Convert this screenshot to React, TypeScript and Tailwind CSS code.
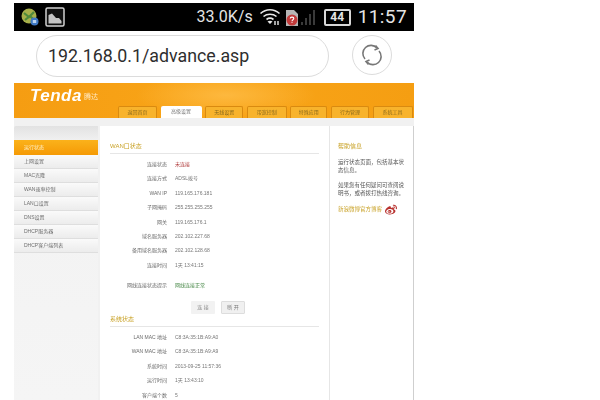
import React from "react"
import { FaWeibo } from "react-icons/fa"

const cjk = "font-['Liberation_Sans','Noto_Sans_CJK_SC',sans-serif]"

const tabs = [
  { label: "返回首页", w: "w-[39px]", active: false },
  { label: "高级设置", w: "w-[41px]", active: true },
  { label: "无线设置", w: "w-[38px]", active: false },
  { label: "带宽控制", w: "w-[40px]", active: false },
  { label: "特殊应用", w: "w-[37px]", active: false },
  { label: "行为管理", w: "w-[38px]", active: false },
  { label: "系统工具", w: "w-[40px]", active: false }
]

const menu = ["上网设置", "MAC克隆", "WAN速率控制", "LAN口设置", "DNS设置", "DHCP服务器", "DHCP客户端列表"]

const wanRows = [
  { label: "连接状态", value: "未连接", cls: "text-[#b03a3a]" },
  { label: "连接方式", value: "ADSL拨号" },
  { label: "WAN IP", value: "119.165.176.181" },
  { label: "子网掩码", value: "255.255.255.255" },
  { label: "网关", value: "119.165.176.1" },
  { label: "域名服务器", value: "202.102.227.68" },
  { label: "备用域名服务器", value: "202.102.128.68" },
  { label: "连接时间", value: "1天 13:41:15" }
]

const sysRows = [
  { label: "LAN MAC 地址", value: "C8:3A:35:1B:A9:A0" },
  { label: "WAN MAC 地址", value: "C8:3A:35:1B:A9:A9" },
  { label: "系统时间", value: "2013-09-25 11:57:36" },
  { label: "运行时间", value: "1天 13:43:10" },
  { label: "客户端个数", value: "5" }
]

const Row = ({ label, value, cls }: { label: string; value: string; cls?: string }) => (
  <div className="flex h-[14.4px] items-center">
    <div className="w-[57px] text-right whitespace-nowrap text-[#6b6b6b]">{label}</div>
    <div className={`ml-[8px] whitespace-nowrap ${cls ?? "text-[#777]"}`}>{value}</div>
  </div>
)

const StatusBar = () => (
  <div className="flex h-[28px] items-center bg-black pl-[7px] pr-[7px] text-[#e4e4e4]">
    <svg width="18" height="18" viewBox="0 0 18 18" className="mt-[-1px]">
      <circle cx="8" cy="8" r="7.5" fill="#a8b04a" />
      <path d="M3 5 L8 9 L13 4 M4 12 L9 8 L13 12" stroke="#4f8a3c" strokeWidth="2.2" fill="none" />
      <circle cx="13.5" cy="13.5" r="4" fill="#3f78c4" />
      <rect x="11.8" y="12" width="3.4" height="3" fill="#bcd4f0" />
    </svg>
    <svg width="20" height="20" viewBox="0 0 20 20" className="ml-[6px]">
      <rect x="1" y="1" width="18" height="18" rx="1.5" fill="#111" stroke="#cfcfcf" strokeWidth="1.5" />
      <path d="M3.5 16.5 V8 L7 6.5 L11 11 L14 11 L16.5 14 V16.5 Z" fill="#c4c4c4" />
    </svg>
    <div className="ml-auto flex items-center">
      <span className="text-[16px] font-['Roboto',sans-serif]">33.0K/s</span>
      <svg width="22" height="20" viewBox="0 0 22 20" className="ml-[6px]">
        <g fill="none" stroke="#e8e8e8" strokeWidth="1.6">
          <path d="M1.5 6.5 C7 1.5 15 1.5 20.5 6.5" />
          <path d="M4.5 9.5 C8 6.5 14 6.5 17.5 9.5" />
          <path d="M7.5 12.5 C9.5 11 12.5 11 14.5 12.5" />
        </g>
        <path d="M11 17 L8.5 14.5 C10 13.5 12 13.5 13.5 14.5 Z" fill="#e8e8e8" />
        <path d="M16 14 v4 M19 14 v4" stroke="#e8e8e8" strokeWidth="1.4" />
      </svg>
      <svg width="14" height="19" viewBox="0 0 14 19" className="ml-[4px]">
        <path d="M1 2 H9 L13 6 V18 H1 Z" fill="#b5b5b5" />
        <circle cx="7" cy="12" r="5.5" fill="#c23a3a" />
        <path d="M5.2 10.5 C5.4 8.6 8.8 8.8 8.8 10.6 C8.8 11.8 7 11.8 7 13.2 M7 14.2 V15" stroke="#fff" strokeWidth="1.1" fill="none" />
      </svg>
      <div className="ml-[2px] flex items-end gap-[2px]">
        <div className="h-[3px] w-[2px] bg-[#3a3a3a]" />
        <div className="h-[7px] w-[2px] bg-[#3a3a3a]" />
        <div className="h-[11px] w-[2px] bg-[#3a3a3a]" />
        <div className="h-[15px] w-[2px] bg-[#3a3a3a]" />
      </div>
      <div className="ml-[9px] flex h-[17px] w-[27px] items-center justify-center rounded-[2px] border-2 border-[#d8d8d8] text-[12px] font-bold font-['Roboto',sans-serif]">
        44
      </div>
      <span className="ml-[7px] text-[19px] font-['Roboto',sans-serif] tracking-[0.4px]">11:57</span>
    </div>
  </div>
)

const AddressBar = () => (
  <div className="flex h-[52px] items-start pl-[22px] pt-[4px]">
    <div className="flex h-[42px] w-[293px] items-center rounded-[21px] border border-[#dcdcdc] bg-white pl-[11px] text-[17.8px] text-[#2e2e2e] font-['Roboto',sans-serif]">
      192.168.0.1/advance.asp
    </div>
    <div className="ml-[23px] flex h-[40px] w-[40px] items-center justify-center rounded-full border border-[#dcdcdc]">
      <svg width="22" height="22" viewBox="0 0 22 22" fill="none" stroke="#777" strokeWidth="1.6">
        <path d="M4 15 A8 8 0 0 1 16 4" />
        <path d="M18 7 A8 8 0 0 1 6 18" />
        <path d="M14.5 1.5 L17 4.5 L13.5 6" />
        <path d="M7.5 20.5 L5 17.5 L8.5 16" />
      </svg>
    </div>
  </div>
)

const Header = () => (
  <div className="h-[35px] bg-[radial-gradient(ellipse_90px_22px_at_53%_35%,#fdb83e,transparent),linear-gradient(90deg,#f59d12,#f9a518_50%,#f59e12)]">
    <div className="flex h-[23px] items-end pl-[16px] blur-[0.3px]">
      <span className="text-[17px] leading-[20px] italic font-bold text-white font-['Liberation_Sans',sans-serif] tracking-[0.5px]">Tenda</span>
      <span className={`mb-[4px] ml-[2px] text-[7px] leading-[10px] text-[#ffe9c4] ${cjk}`}>腾达</span>
    </div>
    <div className="flex h-[12px] items-end gap-[3.6px] pl-[104px]">
      {tabs.map((tab) => (
        <div
          key={tab.label}
          className={`${tab.w} flex h-[12px] items-center justify-center rounded-t-[2px] text-[5px] blur-[0.4px] ${cjk} ${
            tab.active ? "bg-white text-[#777]" : "bg-[#f8b32c] border-t border-x border-[#d98a10] text-[#8a6a1c]"
          }`}
        >
          {tab.label}
        </div>
      ))}
    </div>
  </div>
)

const Sidebar = () => (
  <div className={`w-[84px] shrink-0 pt-[14px] bg-[linear-gradient(180deg,#e2e2e2,#f2f2f2_16px,#f5f5f5)] rounded-tl-[2px] text-[5px] ${cjk}`}>
    <div className="flex h-[15px] items-center bg-[linear-gradient(180deg,#fbb21b,#f59a05)] pl-[10px] text-[#fff3d0] blur-[0.4px]">运行状态</div>
    {menu.map((item) => (
      <div key={item} className="flex h-[14px] items-center border-b border-[#dedede] bg-[linear-gradient(180deg,#fafafa,#ececec)] pl-[10px] text-[#6e6e6e] blur-[0.4px]">
        {item}
      </div>
    ))}
  </div>
)

const Main = () => (
  <div className={`w-[230px] shrink-0 border-r border-[#e6e6e6] pl-[10px] pr-[10px] pt-[14px] text-[5px] ${cjk}`}>
    <div className="blur-[0.4px]">
      <div className="flex h-[14px] items-center border-b border-[#e6e6e6] text-[6px] text-[#c9a227]">WAN口状态</div>
      <div className="pt-[3.5px]">
        {wanRows.map((row) => (
          <Row key={row.label} {...row} />
        ))}
      </div>
      <div className="mt-[6px]">
        <Row label="网线连接状态提示" value="网线连接正常" cls="text-[#4a8a4a]" />
      </div>
      <div className="mt-[8px] flex gap-[6px] pl-[81px]">
        <div className="flex h-[13px] w-[24px] items-center justify-center rounded-[1px] bg-[#f2f2f2] text-[#888]">连 接</div>
        <div className="flex h-[13px] w-[24px] items-center justify-center rounded-[1px] border border-[#ddd] bg-[#f0f0f0] text-[#777]">断 开</div>
      </div>
      <div className="mt-[-1px] flex h-[14px] items-center border-b border-[#e6e6e6] text-[6px] text-[#c9a227]">系统状态</div>
      <div className="pt-[3.5px]">
        {sysRows.map((row) => (
          <Row key={row.label} {...row} />
        ))}
      </div>
    </div>
  </div>
)

const Help = () => (
  <div className={`flex-1 border-r border-[#cfcfcf] pl-[8px] pr-[6px] pt-[16px] text-[5.5px] leading-[8.5px] text-[#555] ${cjk}`}>
    <div className="blur-[0.4px]">
      <div className="text-[6px] text-[#c9a227]">帮助信息</div>
      <div className="mt-[7px]">运行状态页面，包括基本状态信息。</div>
      <div className="mt-[6px]">如果您有任何疑问可查阅说明书，或者拨打热线咨询。</div>
      <div className="mt-[6px] flex items-center text-[#c9a227]">
        <span>新浪微博官方博客</span>
        <FaWeibo className="ml-[3px] text-[12px] text-[#b8322f]" />
      </div>
    </div>
  </div>
)

export default function App() {
  return (
    <div className="h-[400px] w-[600px] overflow-hidden bg-white">
      <div className="ml-[14px] w-[400px] pt-[3px]">
        <StatusBar />
        <AddressBar />
        <Header />
        <div className="flex h-[282px] bg-[#f1f1f1] pt-[8px]">
          <Sidebar />
          <div className="ml-[2px] flex h-[274px] flex-1 bg-white">
            <Main />
            <Help />
          </div>
        </div>
      </div>
    </div>
  )
}
